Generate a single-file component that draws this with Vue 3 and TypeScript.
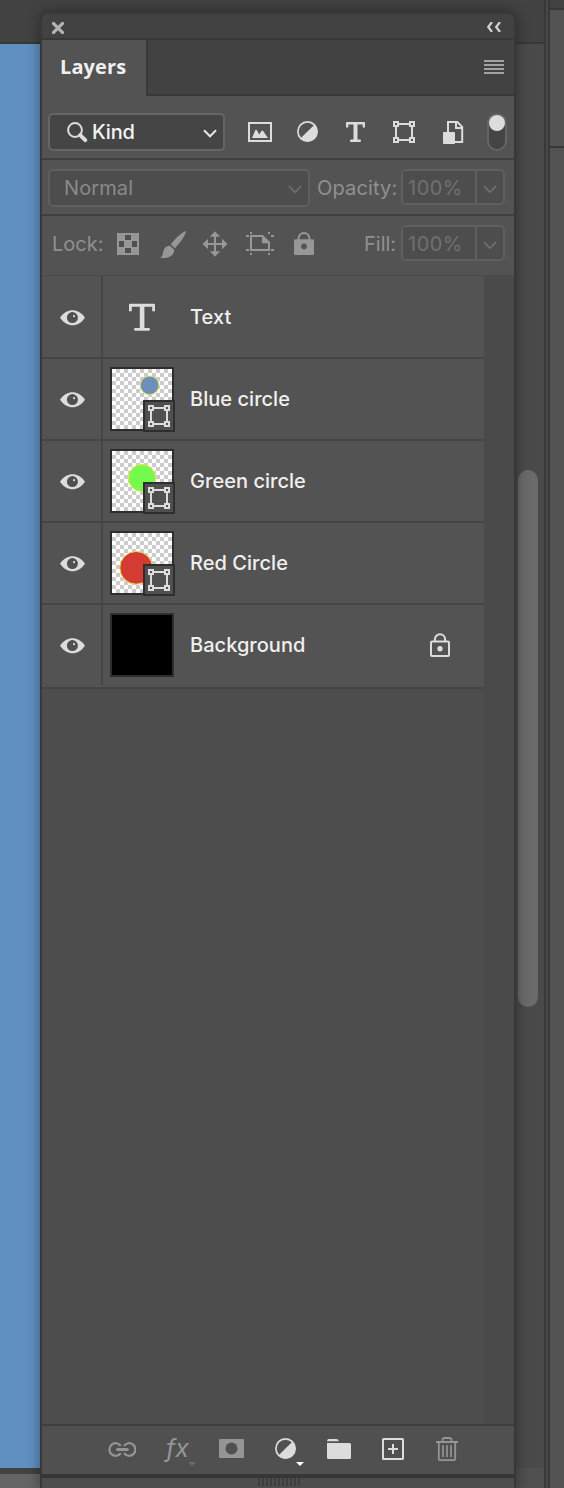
<script setup lang="ts">
interface Layer {
  name: string
  kind: 'text' | 'shape' | 'fill'
  locked?: boolean
  cx?: number
  cy?: number
  r?: number
  color?: string
}

const layers: Layer[] = [
  { name: 'Text', kind: 'text' },
  { name: 'Blue circle', kind: 'shape', cx: 37.6, cy: 16.3, r: 9.3, color: '#6d8fbe' },
  { name: 'Green circle', kind: 'shape', cx: 30, cy: 27, r: 13.5, color: '#74fa4c' },
  { name: 'Red Circle', kind: 'shape', cx: 24.2, cy: 34.8, r: 16.4, color: '#d43c33' },
  { name: 'Background', kind: 'fill', locked: true },
]
</script>

<template>
  <div class="screen">
    <div class="workspace">
      <div class="main-col">
        <div class="app-bar"></div>
        <div class="stage">
          <div class="canvas"></div>
          <div class="track"><div class="thumb-bar"></div></div>
        </div>
        <div class="bottom"><div class="status"></div><div class="corner"></div></div>
      </div>
      <div class="divider"></div>
      <div class="side-col">
        <div class="side-top"></div>
        <div class="side-mid"></div>
        <div class="side-rest"></div>
      </div>
    </div>

    <section class="panel">
      <header class="titlebar">
        <svg class="close" width="12" height="12" viewBox="0 0 12 12"><path d="M1.4 1.4 10.6 10.6M10.6 1.4 1.4 10.6" stroke="#b4b4b4" stroke-width="3.2" stroke-linecap="square" /></svg>
        <svg width="14" height="10" viewBox="0 0 14 10"><path d="M5 0 1.2 5 5 10M13 0 9.2 5 13 10" fill="none" stroke="#d0d0d0" stroke-width="2.3" /></svg>
      </header>
      <div class="tabs">
        <div class="tab">Layers</div>
        <div class="tab-rest">
          <div class="menu"><i></i><i></i><i></i><i></i></div>
        </div>
      </div>

      <div class="filter-row">
        <div class="select kind">
          <svg class="search" width="22" height="22" viewBox="0 0 22 22"><circle cx="9" cy="8" r="6.9" fill="none" stroke="#dcdcdc" stroke-width="2" /><path d="M14.2 13.2 19.2 18.2" stroke="#dcdcdc" stroke-width="4" stroke-linecap="round" /></svg>
          <span>Kind</span>
          <svg class="chev" width="14" height="9" viewBox="0 0 14 9"><path d="M1 1.2 7 7.3 13 1.2" fill="none" stroke="currentColor" stroke-width="2" /></svg>
        </div>
        <div class="filter-icons">
          <svg width="28" height="28" viewBox="0 0 28 28"><rect x="3" y="5" width="22" height="18" fill="none" stroke="currentColor" stroke-width="2" /><path d="M6 20 9 13Q10 10 11.3 13L13.2 16.4 15.5 13Q16.5 11.8 17.5 13.4L22 20Z" fill="currentColor" /></svg>
          <svg width="28" height="28" viewBox="0 0 28 28"><circle cx="13.5" cy="13.5" r="9.6" fill="none" stroke="currentColor" stroke-width="1.7" /><path d="M20.6 6.4A10 10 0 0 1 6.4 20.6Z" fill="currentColor" /></svg>
          <svg width="28" height="28" viewBox="0 0 28 28"><path d="M4 5Q4 4 5 4H22Q23 4 23 5V9.5H20.7V6.4H15.5V21.6H18Q19 21.6 19 22.8T18 24H9Q8 24 8 22.8T9 21.6H11.5V6.4H6.3V9.5H4Z" fill="currentColor" /></svg>
          <svg width="28" height="28" viewBox="0 0 28 28"><g fill="none" stroke="currentColor" stroke-width="2"><path d="M9 6H19M9 22H19M6 9V19M22 9V19" /><rect x="4" y="4" width="4" height="4" /><rect x="20" y="4" width="4" height="4" /><rect x="4" y="20" width="4" height="4" /><rect x="20" y="20" width="4" height="4" /></g></svg>
          <svg width="28" height="28" viewBox="0 0 28 28"><path d="M10 14V4H19.4L24.2 8.8V24H16" fill="none" stroke="currentColor" stroke-width="2" /><path d="M18 4V10H24" fill="none" stroke="currentColor" stroke-width="2" /><rect x="5" y="14" width="12" height="12" rx="1" fill="currentColor" /></svg>
        </div>
        <div class="toggle"><i></i></div>
      </div>

      <div class="blend-row">
        <div class="select mode">
          <span>Normal</span>
          <svg class="chev" width="14" height="9" viewBox="0 0 14 9"><path d="M1 1.2 7 7.3 13 1.2" fill="none" stroke="currentColor" stroke-width="1.8" /></svg>
        </div>
        <span class="label opacity">Opacity:</span>
        <div class="percent">
          <span>100%</span>
          <div class="drop"><svg width="14" height="9" viewBox="0 0 14 9"><path d="M1 1.2 7 7.3 13 1.2" fill="none" stroke="currentColor" stroke-width="1.8" /></svg></div>
        </div>
      </div>

      <div class="lock-row">
        <span class="label lock">Lock:</span>
        <div class="lock-icons">
          <svg width="28" height="28" viewBox="0 0 28 28"><rect x="3" y="3" width="22" height="22" fill="currentColor" /><path d="M11 5h6v5h-6zM5 11h5v6H5zM18 11h5v6h-5zM11 18h6v5h-6zM5 5h0z" fill="#4f4f4f" /></svg>
          <svg width="28" height="28" viewBox="0 0 28 28"><path d="M28 1.2C27.8 4 23 12 17 18.2L12.8 14.6C17 8.5 24.8 1.3 28 1.2ZM11.8 15.8 16 19.4C16.6 24.8 12 29 2.2 27.8 5.6 26 4.2 22.5 6.5 18.6 7.6 16.8 9.6 15.8 11.8 15.8Z" fill="currentColor" /></svg>
          <svg width="28" height="28" viewBox="0 0 28 28"><path d="M13 5V23M4 14H22" stroke="currentColor" stroke-width="2" /><path d="M13 1.3 18.2 6.8H7.8ZM13 26.7 18.2 21.2H7.8ZM.5 14 6 8.8V19.2ZM25.5 14 20 8.8V19.2Z" fill="currentColor" /></svg>
          <svg width="28" height="28" viewBox="0 0 28 28"><path d="M5 6H16.5L23 12.5V20H5Z" fill="none" stroke="currentColor" stroke-width="2" /><path d="M16 5.5 23.8 13.2H16Z" fill="currentColor" /><path d="M0 6h3M0 20h3M25 6h3M25 20h3M5 2v2M23 2v2M5 23v2M23 23v2" stroke="currentColor" stroke-width="2" /></svg>
          <svg width="28" height="28" viewBox="0 0 28 28"><path d="M8.5 10V8.5a5.5 5.5 0 0 1 11 0V10" fill="none" stroke="currentColor" stroke-width="2" /><rect x="4" y="9.3" width="20" height="15.7" rx="1.5" fill="currentColor" /><circle cx="14" cy="16.4" r="2.8" fill="#535353" /></svg>
        </div>
        <span class="label fill">Fill:</span>
        <div class="percent">
          <span>100%</span>
          <div class="drop"><svg width="14" height="9" viewBox="0 0 14 9"><path d="M1 1.2 7 7.3 13 1.2" fill="none" stroke="currentColor" stroke-width="1.8" /></svg></div>
        </div>
      </div>

      <div class="list-area">
        <ul class="list">
          <li v-for="layer in layers" :key="layer.name" class="layer">
            <div class="eye">
              <svg width="25" height="16" viewBox="0 0 25 16"><path d="M0 7.7C3.8 2.5 8 .3 12.5 .3S21.2 2.5 25 7.7C21.2 13 17 15.2 12.5 15.2S3.8 13 0 7.7Z" fill="#dcdcdc" /><circle cx="12.4" cy="7.6" r="5.5" fill="#505050" /><rect x="13.1" y="5.2" width="1.9" height="1.9" fill="#dcdcdc" /></svg>
            </div>
            <div class="preview">
              <svg v-if="layer.kind === 'text'" class="type-mark" width="28" height="28" viewBox="0 0 28 28"><path d="M1 1.8Q1 .7 2.1 .7H25.9Q27 .7 27 1.8V8.2H24.2V3.7H16.4V24.9H20.8Q22 24.9 22 26.3T20.8 27.7H7.2Q6 27.7 6 26.3T7.2 24.9H11.8V3.7H3.8V8.2H1Z" fill="#dcdcdc" /></svg>
              <div v-else class="thumb" :class="{ solid: layer.kind === 'fill' }">
                <template v-if="layer.kind === 'shape'">
                  <svg width="60" height="60" viewBox="0 0 60 60"><circle :cx="layer.cx" :cy="layer.cy" :r="layer.r" :fill="layer.color" stroke="#e8e24a" stroke-width="1" /></svg>
                  <div class="badge"><svg width="28" height="28" viewBox="0 0 28 28"><g fill="none" stroke="#dcdcdc" stroke-width="2"><path d="M9 6H19M9 22H19M6 9V19M22 9V19" /><rect x="4" y="4" width="4" height="4" /><rect x="20" y="4" width="4" height="4" /><rect x="4" y="20" width="4" height="4" /><rect x="20" y="20" width="4" height="4" /></g></svg></div>
                </template>
              </div>
            </div>
            <span class="name">{{ layer.name }}</span>
            <svg v-if="layer.locked" class="lock-mark" width="20" height="24" viewBox="0 0 20 24"><path d="M4.9 8.5V6.3a5.1 5.1 0 0 1 10.2 0V8.5" fill="none" stroke="#dcdcdc" stroke-width="2" /><rect x="1" y="8.6" width="18" height="14.4" rx="1" fill="none" stroke="#dcdcdc" stroke-width="2" /><circle cx="10" cy="15.7" r="2.7" fill="#dcdcdc" /></svg>
          </li>
        </ul>
        <div class="gutter"></div>
      </div>

      <footer class="actions">
        <svg class="dim" width="28" height="32" viewBox="0 0 28 32"><g fill="none" stroke="currentColor"><path d="M12.8 9.8A6.3 6.3 0 1 0 12.8 17.2M16 9.8A6.3 6.3 0 1 1 16 17.2" stroke-width="2.2" /><path d="M9.6 13.5H19.2" stroke-width="3.2" stroke-linecap="round" /></g></svg>
        <span class="fx">fx</span>
        <svg class="dim" width="28" height="32" viewBox="0 0 28 32"><rect x="3" y="3" width="25" height="19" rx="1" fill="currentColor" /><circle cx="15.5" cy="12.5" r="6" fill="#505050" /></svg>
        <svg width="28" height="32" viewBox="0 0 28 32"><circle cx="15.5" cy="12.5" r="9.6" fill="none" stroke="currentColor" stroke-width="1.7" /><path d="M22.6 5.4A10 10 0 0 1 8.4 19.6Z" fill="currentColor" /></svg>
        <svg width="28" height="32" viewBox="0 0 28 32"><path d="M3 5.2Q3 3 5 3H12Q14.5 3 15 5.2ZM3 7H25.5Q27 7 27 8.5V21.5Q27 23 25.5 23H4.5Q3 23 3 21.5Z" fill="currentColor" /></svg>
        <svg width="28" height="32" viewBox="0 0 28 32"><rect x="5" y="3" width="20" height="20" rx=".6" fill="none" stroke="currentColor" stroke-width="2" /><path d="M15 8V18M10 13H20" stroke="currentColor" stroke-width="2" /></svg>
        <svg class="dim" width="28" height="32" viewBox="0 0 28 32"><g fill="none" stroke="currentColor" stroke-width="1.8"><path d="M4 6H26M10.5 5.5V4Q10.5 2 12.5 2H17.5Q19.5 2 19.5 4V5.5M6.8 7V23Q6.8 24.2 8 24.2H22Q23.2 24.2 23.2 23V7" /><path d="M11 9.3V21M15 9.3V21M19 9.3V21" stroke-width="1.7" /></g></svg>
        <i class="caret fx-caret"></i>
        <i class="caret adj-caret"></i>
      </footer>
      <div class="resize"><div class="grip"></div></div>
    </section>
  </div>
</template>

<style>
body {
  background: #484848;
}
</style>

<style scoped>
.screen {
  position: relative;
  width: 564px;
  height: 1488px;
  overflow: hidden;
  font-family: Inter, "Liberation Sans", sans-serif;
  font-size: 20px;
  color: #f0f0f0;
}
.screen * { box-sizing: border-box; }
svg { display: block; flex: none; }

.workspace { display: flex; height: 100%; }
.main-col { width: 544px; display: flex; flex-direction: column; }
.app-bar { height: 44px; background: #424242; border-bottom: 2px solid #383838; }
.stage { height: 1424px; display: flex; justify-content: space-between; background: #4a4a4a; }
.canvas { width: 60px; background: #608fc1; }
.track { width: 26px; padding-top: 426px; }
.thumb-bar { width: 20px; height: 537px; border-radius: 10px; background: #6a6a6a; }
.bottom { height: 20px; display: flex; }
.status { width: 60px; background: #656565; border-top: 6px solid #424242; }
.corner { flex: 1; background: #505050; }
.divider { width: 6px; background: #484848; border: solid #383838; border-width: 0 2px; }
.side-col { width: 14px; display: flex; flex-direction: column; background: #535353; }
.side-top { height: 10px; background: #424242; border-bottom: 2px solid #383838; }
.side-mid { height: 138px; border-bottom: 2px solid #383838; }

.panel {
  position: absolute;
  left: 40px;
  top: 12px;
  width: 476px;
  height: 1480px;
  border: 2px solid #383838;
  border-radius: 9px 9px 0 0;
  background: #535353;
  overflow: hidden;
  box-shadow: 0 0 14px rgba(0, 0, 0, 0.38);
}
.titlebar {
  height: 26px;
  padding: 8px 13px 0 10px;
  display: flex;
  justify-content: space-between;
  background: #424242;
  border-bottom: 2px solid #383838;
}
.tabs { height: 56px; display: flex; }
.tab {
  width: 104px;
  padding-left: 18px;
  line-height: 53px;
  font-family: "Open Sans", "Noto Sans", sans-serif;
  font-size: 20px;
  font-weight: 700;
  letter-spacing: 0.1px;
}
.tab-rest {
  flex: 1;
  padding: 20px 10px 0 0;
  display: flex;
  justify-content: flex-end;
  background: #424242;
  border: solid #383838;
  border-width: 0 0 2px 2px;
}
.menu { width: 20px; display: flex; flex-direction: column; gap: 2px; }
.menu i { height: 2px; background: #a2a2a2; }

.filter-row {
  height: 64px;
  padding: 17px 7px 0 6px;
  display: flex;
  border-bottom: 2px solid #3e3e3e;
}
.select {
  height: 38px;
  border: 2px solid #656565;
  border-radius: 5px;
  background: #454545;
  display: flex;
  align-items: center;
  justify-content: space-between;
}
.kind { width: 177px; padding: 0 6px 0 16px; color: #e4e4e4; }
.kind span { flex: 1; margin-left: 4px; font-weight: 500; letter-spacing: -0.2px; color: #f4f4f4; }
.chev { margin-top: 3px; }
.search { margin-top: 2px; }
.filter-icons { display: flex; gap: 20px; margin: 5px 0 0 21px; color: #dcdcdc; }
.toggle {
  width: 20px;
  height: 38px;
  margin-left: auto;
  border: 2px solid #656565;
  border-radius: 10px;
  background: #454545;
}
.toggle i { display: block; width: 16px; height: 16px; border-radius: 50%; background: #dcdcdc; }

.blend-row {
  height: 56px;
  padding: 9px 9px 0 6px;
  display: flex;
  border-bottom: 2px solid #3e3e3e;
}
.mode {
  width: 262px;
  padding: 0 6px 0 14px;
  border-color: #5f5f5f;
  background: #4d4d4d;
  color: #6e6e6e;
}
.mode span { color: #8a8a8a; letter-spacing: 0.1px; }
.label { line-height: 38px; color: #909090; white-space: nowrap; }
.opacity { width: 84px; margin-left: 7px; letter-spacing: 0.15px; }
.percent {
  width: 104px;
  height: 36px;
  border: 2px solid #5f5f5f;
  border-radius: 5px;
  background: #4d4d4d;
  display: flex;
  justify-content: space-between;
  line-height: 34px;
  color: #707070;
}
.percent span { margin-left: 5px; letter-spacing: 0.5px; }
.drop {
  width: 28px;
  padding: 14px 0 0 6px;
  border-left: 2px solid #5f5f5f;
}

.lock-row {
  height: 60px;
  padding: 9px 9px 0 10px;
  display: flex;
  border-bottom: 1px solid #494949;
}
.lock { width: 62px; }
.lock-icons { display: flex; gap: 16px; padding-top: 5px; color: #979797; }
.fill { width: 37px; margin: 0 0 0 46px; }

.list-area { height: 1148px; display: flex; background: #4d4d4d; }
.list { width: 442px; margin: 0; padding: 0; list-style: none; }
.gutter { width: 30px; background: #4a4a4a; }
.layer {
  height: 82px;
  display: flex;
  align-items: center;
  background: #535353;
  border-bottom: 2px solid #454545;
}
.layer:first-child { height: 83px; }
.layer:last-child { height: 84px; padding-bottom: 2px; }
.eye {
  width: 61px;
  height: 100%;
  padding-left: 18px;
  display: flex;
  align-items: center;
  border-right: 2px solid #454545;
}
.eye svg { margin-top: 2px; }
.preview { width: 87px; padding-left: 7px; }
.type-mark { margin-left: 18px; }
.thumb {
  position: relative;
  width: 64px;
  height: 64px;
  border: 2px solid #2e2e2e;
  background: repeating-conic-gradient(#cbcbcb 0 25%, #fff 0 50%) 0 0 / 8px 8px;
}
.thumb.solid { background: #000; }
.badge {
  position: absolute;
  left: 31px;
  top: 31px;
  width: 32px;
  height: 32px;
  border: 2px solid #2e2e2e;
  background: #505050;
}
.name { flex: 1; font-weight: 500; letter-spacing: 0.04px; white-space: nowrap; }
.lock-mark { margin-right: 34px; }

.actions {
  position: relative;
  height: 50px;
  padding: 10px 54px 0 66px;
  display: flex;
  gap: 26px;
  border-top: 2px solid #3e3e3e;
  background: #505050;
  color: #dcdcdc;
}
.dim { color: #959595; }
.fx {
  width: 28px;
  height: 32px;
  padding-left: 4px;
  line-height: 24px;
  font-size: 25px;
  font-style: italic;
  color: #959595;
  white-space: nowrap;
}
.caret {
  position: absolute;
  top: 36px;
  border: solid transparent;
  border-width: 4px 4px 0;
}
.fx-caret { left: 146px; border-top-color: #6a6a6a; }
.adj-caret { left: 254px; border-top-color: #fff; }
.resize {
  height: 16px;
  border-top: 4px solid #363636;
  background: #4d4d4d;
}
.grip {
  width: 42px;
  height: 8px;
  margin-left: 216px;
  background: repeating-linear-gradient(90deg, #3d3d3d 0 2px, #4d4d4d 2px 4px);
}
</style>
